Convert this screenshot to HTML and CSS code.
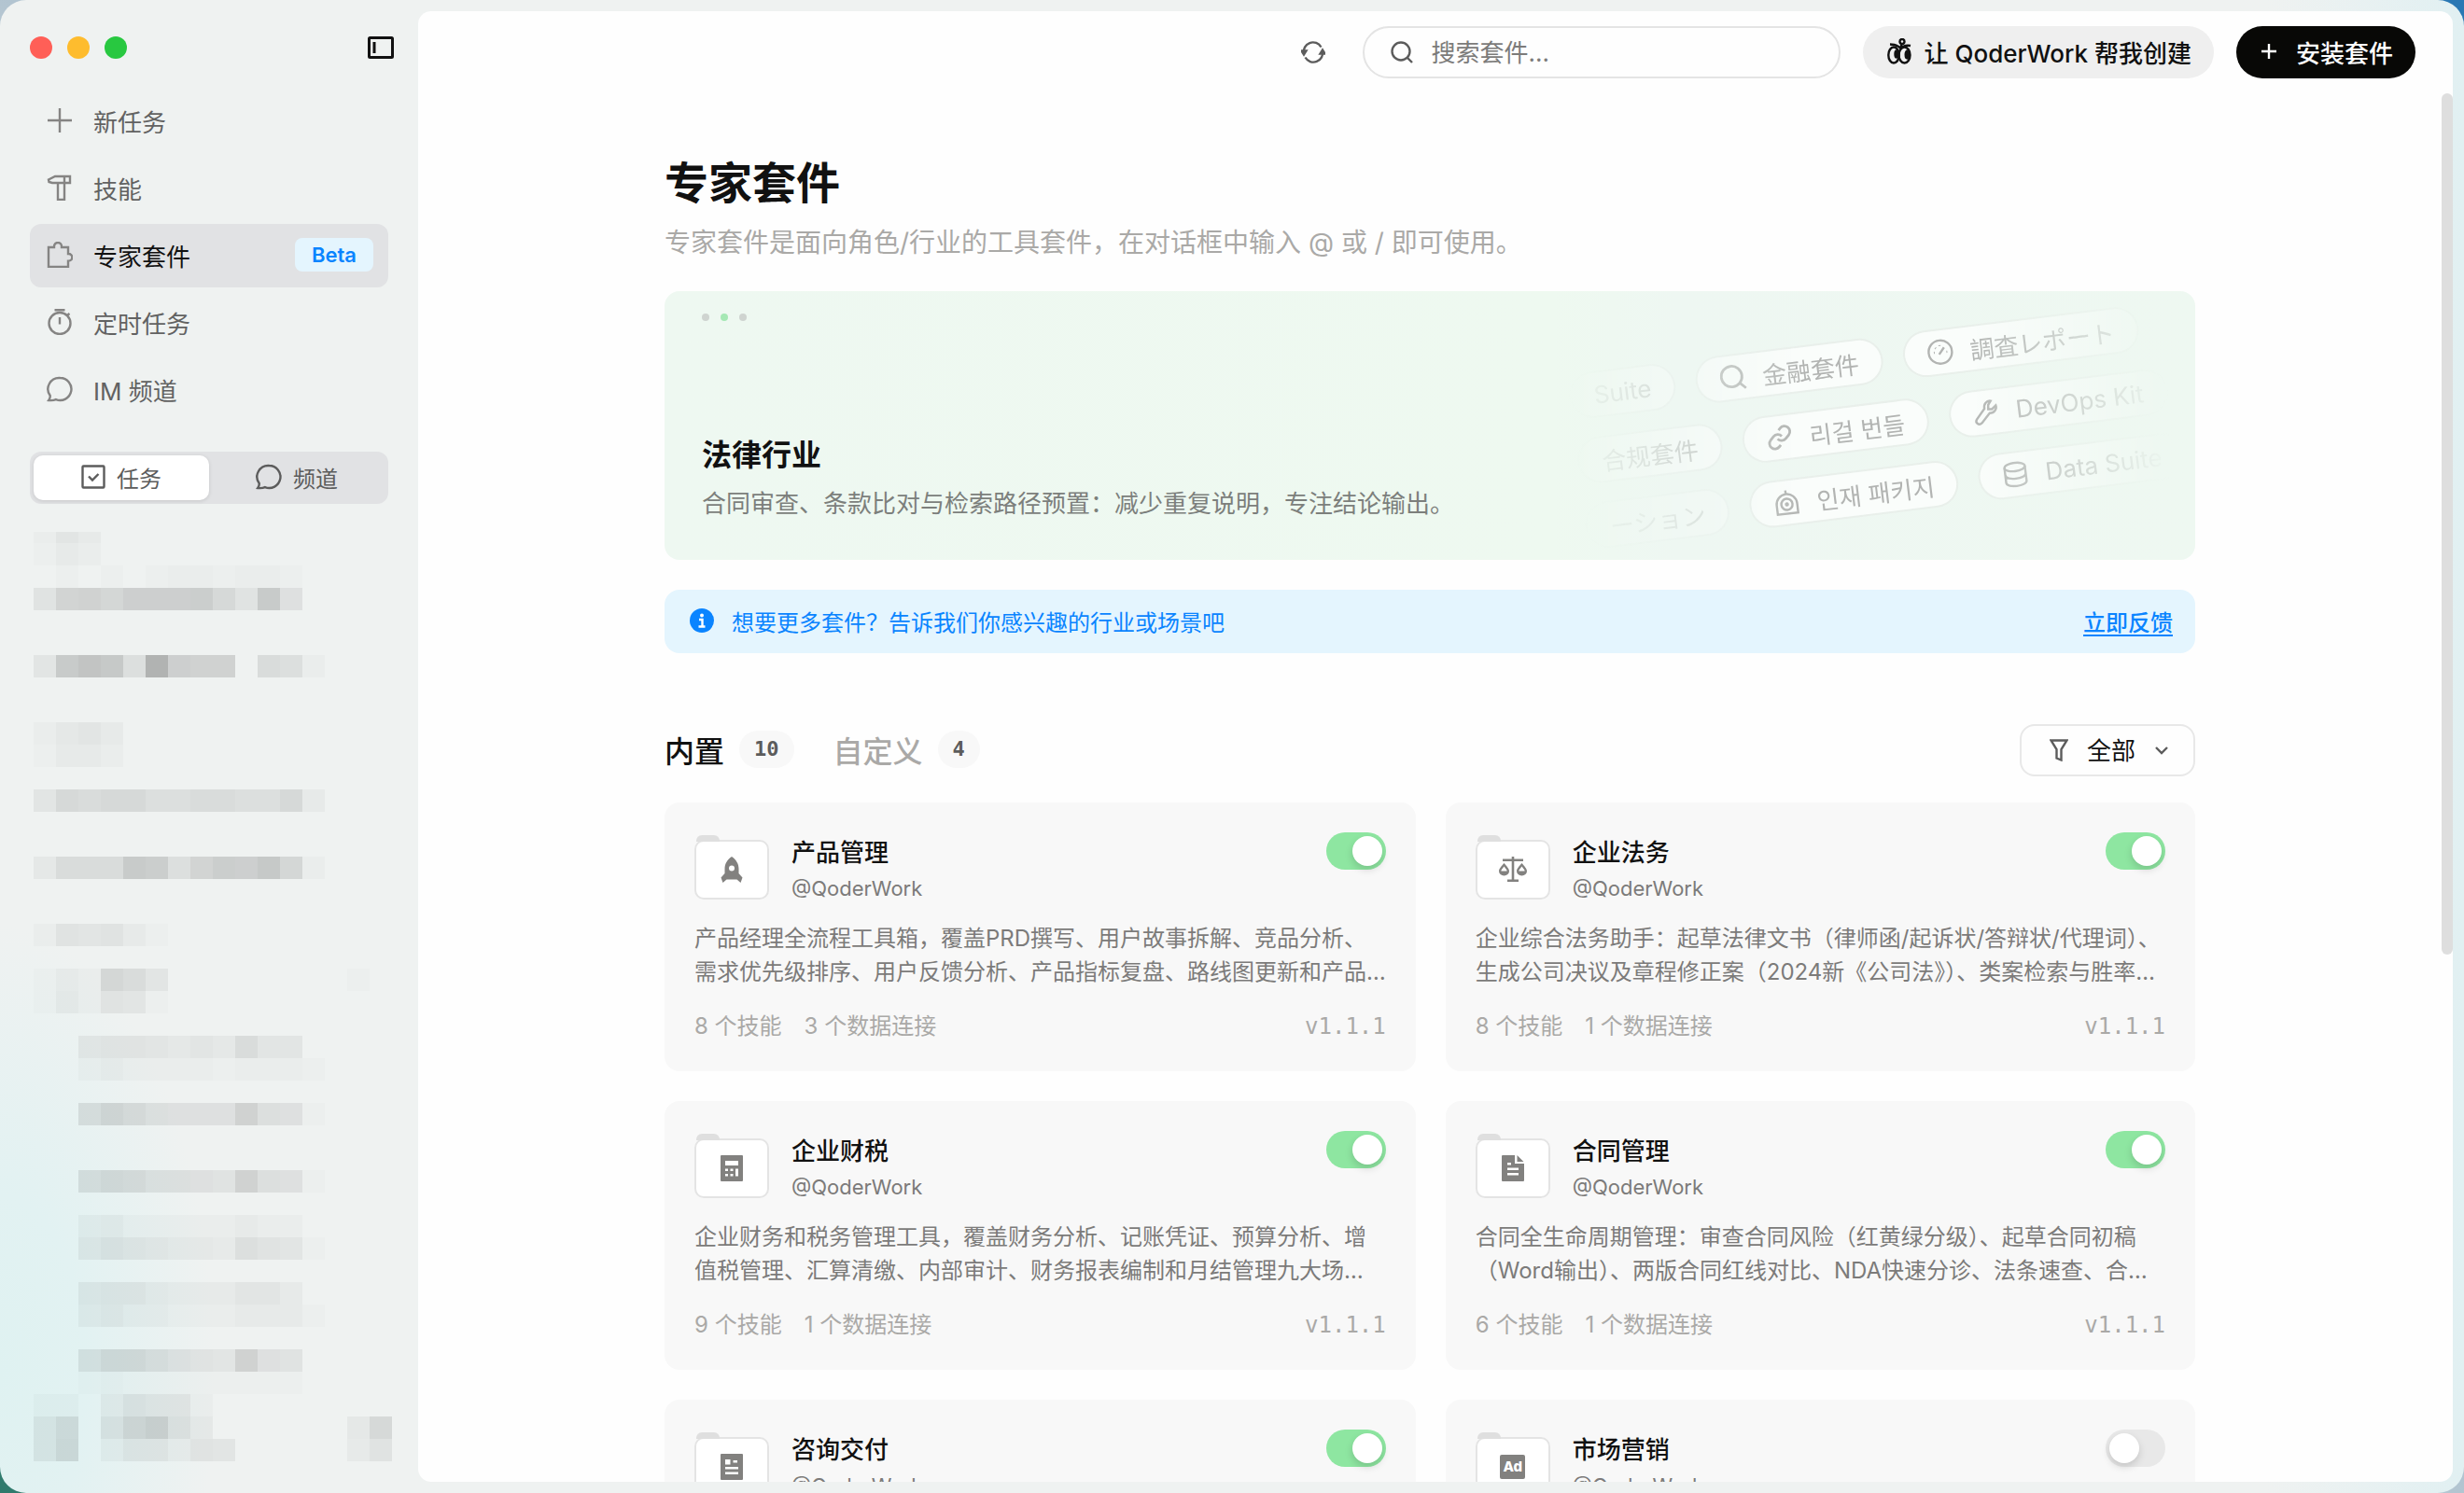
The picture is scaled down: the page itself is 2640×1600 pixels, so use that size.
FILE: index.html
```html
<!DOCTYPE html>
<html lang="zh-CN">

<head>
  <meta charset="UTF-8" />
  <meta name="viewport" content="width=device-width, initial-scale=1.0" />
  <title>专家套件</title>
  <link rel="stylesheet" href="styles.css">
</head>

<body>

  <!-- Icon sprite -->
  <svg class="sprite" aria-hidden="true">
    <symbol id="i-chat" viewBox="0 0 28 28">
      <path d="M14.5 2a12 12 0 1 1-4.6 23.1C8 26 5 26.300 2.200 26c1.200-1.600 1.700-3.300 1.500-5A12 12 0 0 1 14.500 2z" />
    </symbol>
    <symbol id="i-search" viewBox="0 0 24 24">
      <circle cx="11" cy="11" r="9.500" />
      <path d="M18 18l5 5" />
    </symbol>
  </svg>

  <div class="window">

    <aside class="sidebar">
      <div class="titlebar">
        <span class="light red"></span>
        <span class="light yellow"></span>
        <span class="light green"></span>
        <button class="collapse-btn" aria-label="收起侧边栏">
          <svg width="28" height="24" viewBox="0 0 28 24">
            <rect x="1.500" y="1.500" width="25" height="21" rx="1" />
            <path d="M7 6v12" />
          </svg>
        </button>
      </div>

      <nav class="nav">
        <a href="#">
          <svg width="28" height="28" viewBox="0 0 28 28"><path d="M14 1v26M1 14h26" /></svg>
          新任务
        </a>
        <a href="#">
          <svg width="28" height="28" viewBox="0 0 28 28">
            <path d="M2 5.500L9 2h16v7h-6v18h-7V9H6L2.500 8z M19 2v7 M12 9h7" />
          </svg>
          技能
        </a>
        <a href="#" class="active">
          <svg width="28" height="28" viewBox="0 0 28 28">
            <path d="M2 6h6V5a4 4 0 0 1 8 0v1h7v7h.5a3.800 3.800 0 0 1 0 7.600H23V27H2z" />
          </svg>
          专家套件
          <span class="beta">Beta</span>
        </a>
        <a href="#">
          <svg width="28" height="28" viewBox="0 0 28 28">
            <circle cx="14" cy="15.500" r="11.500" />
            <path d="M8.500 1.200h11M14 9v7.500M22 7l2.500-2" />
          </svg>
          定时任务
        </a>
        <a href="#">
          <svg width="28" height="28"><use href="#i-chat" /></svg>
          IM 频道
        </a>
      </nav>

      <div class="segment">
        <button class="selected">
          <svg width="26" height="26" viewBox="0 0 26 26">
            <rect x="1.500" y="1.500" width="23" height="23" rx="1" />
            <path d="M8 12.500l4 4 6.500-6.500" />
          </svg>
          任务
        </button>
        <button>
          <svg width="28" height="28"><use href="#i-chat" /></svg>
          频道
        </button>
      </div>

      <div class="mosaic" id="mosaic" aria-hidden="true"></div>
    </aside>

    <main class="main">
      <header class="toolbar">
        <button class="refresh-btn" aria-label="刷新">
          <svg width="26" height="26" viewBox="0 0 26 26">
            <path d="M3 14.500a10 10 0 0 1 18.500-7M23 11.500a10 10 0 0 1-18.500 7" />
            <path class="solid" d="M.5 11.500h5L3 15.500zM20.500 14.500h5L23 10.500z" />
          </svg>
        </button>
        <label class="search">
          <svg width="24" height="24"><use href="#i-search" /></svg>
          <input type="text" placeholder="搜索套件..." aria-label="搜索套件" />
        </label>
        <button class="pill-btn">
          <svg width="26" height="28" viewBox="0 0 26 28">
            <circle cx="16" cy="3.500" r="2.500" />
            <path d="M3 6.500c6 0 9 1.500 11.500 4.500C17 8 20 7 25 8M15.500 6l-1 5" />
            <ellipse cx="7" cy="18" rx="5.700" ry="8.500" />
            <ellipse cx="18.500" cy="18" rx="6" ry="8.500" />
            <ellipse class="solid" cx="10" cy="17" rx="1.500" ry="3.500" />
            <ellipse class="solid" cx="21.500" cy="17.500" rx="1.800" ry="4" />
          </svg>
          让 QoderWork 帮我创建
        </button>
        <button class="pill-btn dark">
          <svg width="18" height="18" viewBox="0 0 18 18"><path d="M9 1v16M1 9h16" /></svg>
          安装套件
        </button>
      </header>

      <div class="scroll-area">
        <div class="content">
          <h1>专家套件</h1>
          <p class="subtitle">专家套件是面向角色/行业的工具套件，在对话框中输入 @ 或 / 即可使用。</p>

          <section class="banner">
            <div class="dots"><span></span><span class="on"></span><span></span></div>
            <div class="banner-text">
              <h2>法律行业</h2>
              <p>合同审查、条款比对与检索路径预置：减少重复说明，专注结论输出。</p>
            </div>
            <div class="chips" aria-hidden="true">
              <div class="chips-tilt">
                <div class="chip-row">
                  <span class="chip">Suite</span>
                  <span class="chip">
                    <svg width="28" height="28" viewBox="0 0 24 24"><use href="#i-search" /></svg>
                    金融套件
                  </span>
                  <span class="chip">
                    <svg width="28" height="28" viewBox="0 0 28 28">
                      <circle cx="14" cy="14" r="12.500" />
                      <path d="M12.500 16.500l6-7M7 14h1M9 9l.7.7M14 6.500v1M20.500 14.500h1" />
                    </svg>
                    調査レポート
                  </span>
                </div>
                <div class="chip-row">
                  <span class="chip">合规套件</span>
                  <span class="chip">
                    <svg width="28" height="28" viewBox="0 0 24 24">
                      <path d="M10 13a5 5 0 0 0 7.540.540l3-3a5 5 0 0 0-7.070-7.070l-1.720 1.710M14 11a5 5 0 0 0-7.540-.540l-3 3a5 5 0 0 0 7.070 7.070l1.710-1.710" />
                    </svg>
                    리걸 번들
                  </span>
                  <span class="chip">
                    <svg width="28" height="28" viewBox="0 0 28 28">
                      <path d="M20 2.500c-4-1-8 2.500-7.500 7.500L3 20.500c-2.500 3.500 1.500 7 5 4.500L17.500 15.500c5 .5 8.500-3.500 7.500-7.500l-4.500 3.500-4-.5.5-4.500z" />
                    </svg>
                    DevOps Kit
                  </span>
                </div>
                <div class="chip-row">
                  <span class="chip faint">ーション</span>
                  <span class="chip">
                    <svg width="28" height="28" viewBox="0 0 28 28">
                      <path d="M3 26V16a11 11 0 0 1 22 0v10zM14 1v4" />
                      <circle cx="14" cy="16" r="6" />
                      <circle cx="14" cy="16" r="1" />
                    </svg>
                    인재 패키지
                  </span>
                  <span class="chip">
                    <svg width="28" height="28" viewBox="0 0 28 28">
                      <ellipse cx="14" cy="6" rx="11" ry="4.500" />
                      <path d="M3 6v16c0 6 22 6 22 0V6M3 14c0 6 22 6 22 0" />
                    </svg>
                    Data Suite
                  </span>
                </div>
              </div>
            </div>
          </section>

          <div class="notice">
            <svg width="28" height="28" viewBox="0 0 28 28">
              <circle class="disc" cx="14" cy="14" r="13" />
              <circle class="mark" cx="14" cy="8.500" r="2" />
              <path d="M11 13h3.500v7M10.500 20.500h7" />
            </svg>
            <span>想要更多套件？告诉我们你感兴趣的行业或场景吧</span>
            <a href="#">立即反馈</a>
          </div>

          <div class="tabs">
            <button class="tab current">内置 <span class="count">10</span></button>
            <button class="tab">自定义 <span class="count">4</span></button>
            <label class="filter">
              <svg width="20" height="24" viewBox="0 0 20 24"><path d="M1.500 1.500h17L12.500 11v11.500l-5-2V11z" /></svg>
              <select aria-label="筛选">
                <option>全部</option>
              </select>
              <svg width="16" height="16" viewBox="0 0 16 16"><path d="M2 5l6 6 6-6" /></svg>
            </label>
          </div>

          <div class="cards">
            <article class="card">
              <div class="card-head">
                <div class="folder">
                  <svg width="28" height="28" viewBox="0 0 28 28">
                    <path fill-rule="evenodd" d="M14 0c5 3.500 7.500 8 7.500 13v5l4 4.500-2 5.500-4-3.500h-11L4.500 28l-2-5.500 4-4.500v-5C6.500 8 9 3.500 14 0zM14 9.500a3 3 0 1 0 0 6 3 3 0 0 0 0-6z" />
                  </svg>
                </div>
                <div class="card-title">
                  <h3>产品管理</h3>
                  <p>@QoderWork</p>
                </div>
                <input type="checkbox" class="switch" aria-label="启用产品管理" checked />
              </div>
              <p class="desc">产品经理全流程工具箱，覆盖PRD撰写、用户故事拆解、竞品分析、<br />需求优先级排序、用户反馈分析、产品指标复盘、路线图更新和产品…</p>
              <div class="card-foot">
                <span>8 个技能</span>
                <span>3 个数据连接</span>
                <span class="version">v1.1.1</span>
              </div>
            </article>

            <article class="card">
              <div class="card-head">
                <div class="folder">
                  <svg width="30" height="28" viewBox="0 0 30 28">
                    <path d="M13.700 0h2.600v2.500H26V5h-9.700v19.500H21V27H9v-2.500h4.700V5H4V2.500h9.700z" />
                    <path fill-rule="evenodd" d="M5.500 7C8 10 11 13 11 15.500a5.500 5 0 0 1-11 0C0 13 3 10 5.500 7zM5.500 10.500C4 12.500 2.500 14 2.300 15.500h6.400C8.500 14 7 12.500 5.500 10.500zM24.500 7C27 10 30 13 30 15.500a5.500 5 0 0 1-11 0C19 13 22 10 24.500 7zM24.500 10.500c-1.500 2-3 3.500-3.200 5h6.400c-.2-1.500-1.700-3-3.200-5z" />
                  </svg>
                </div>
                <div class="card-title">
                  <h3>企业法务</h3>
                  <p>@QoderWork</p>
                </div>
                <input type="checkbox" class="switch" aria-label="启用企业法务" checked />
              </div>
              <p class="desc">企业综合法务助手：起草法律文书（律师函/起诉状/答辩状/代理词）、<br />生成公司决议及章程修正案（2024新《公司法》）、类案检索与胜率…</p>
              <div class="card-foot">
                <span>8 个技能</span>
                <span>1 个数据连接</span>
                <span class="version">v1.1.1</span>
              </div>
            </article>

            <article class="card">
              <div class="card-head">
                <div class="folder">
                  <svg width="24" height="28" viewBox="0 0 24 28">
                    <path fill-rule="evenodd" d="M1 0h22a1 1 0 0 1 1 1v26a1 1 0 0 1-1 1H1a1 1 0 0 1-1-1V1a1 1 0 0 1 1-1zM5 6v5h14V6zM5 14.500v2.500h3v-2.500zM10.500 14.500v2.500h3v-2.500zM5 20v2.500h3V20zM10.500 20v2.500h3V20zM16 14.500v8h3v-8z" />
                  </svg>
                </div>
                <div class="card-title">
                  <h3>企业财税</h3>
                  <p>@QoderWork</p>
                </div>
                <input type="checkbox" class="switch" aria-label="启用企业财税" checked />
              </div>
              <p class="desc">企业财务和税务管理工具，覆盖财务分析、记账凭证、预算分析、增<br />值税管理、汇算清缴、内部审计、财务报表编制和月结管理九大场…</p>
              <div class="card-foot">
                <span>9 个技能</span>
                <span>1 个数据连接</span>
                <span class="version">v1.1.1</span>
              </div>
            </article>

            <article class="card">
              <div class="card-head">
                <div class="folder">
                  <svg width="24" height="28" viewBox="0 0 24 28">
                    <path fill-rule="evenodd" d="M1 0h13v9h10v18a1 1 0 0 1-1 1H1a1 1 0 0 1-1-1V1a1 1 0 0 1 1-1zM6 8v2.500h4V8zM6 13.500V16h12v-2.500zM6 19v2.500h12V19zM16.500 0L23.500 7h-7z" />
                  </svg>
                </div>
                <div class="card-title">
                  <h3>合同管理</h3>
                  <p>@QoderWork</p>
                </div>
                <input type="checkbox" class="switch" aria-label="启用合同管理" checked />
              </div>
              <p class="desc">合同全生命周期管理：审查合同风险（红黄绿分级）、起草合同初稿<br />（Word输出）、两版合同红线对比、NDA快速分诊、法条速查、合…</p>
              <div class="card-foot">
                <span>6 个技能</span>
                <span>1 个数据连接</span>
                <span class="version">v1.1.1</span>
              </div>
            </article>

            <article class="card">
              <div class="card-head">
                <div class="folder">
                  <svg width="24" height="28" viewBox="0 0 24 28">
                    <path fill-rule="evenodd" d="M1 0h22a1 1 0 0 1 1 1v26a1 1 0 0 1-1 1H1a1 1 0 0 1-1-1V1a1 1 0 0 1 1-1zM5 6v5.500h5.500V6zM13.500 7v2.500H18V7zM5 14v2.500h14V14zM5 19.500V22h14v-2.500z" />
                  </svg>
                </div>
                <div class="card-title">
                  <h3>咨询交付</h3>
                  <p>@QoderWork</p>
                </div>
                <input type="checkbox" class="switch" aria-label="启用咨询交付" checked />
              </div>
            </article>

            <article class="card">
              <div class="card-head">
                <div class="folder"><span class="ad">Ad</span></div>
                <div class="card-title">
                  <h3>市场营销</h3>
                  <p>@QoderWork</p>
                </div>
                <input type="checkbox" class="switch" aria-label="启用市场营销" />
              </div>
            </article>
          </div>
        </div>
        <div class="scroll-thumb"></div>
      </div>
    </main>

  </div>

  <script src="script.js"></script>
</body>

</html>
```

FILE: styles.css
```css
* {
  box-sizing: border-box;
}

body {
  margin: 0;
  font-family: Inter, "Noto Sans CJK SC", "Noto Sans CJK KR", sans-serif;
  font-size: 24px;
  color: #111;
  background: linear-gradient(to top right, #2f7a6c 0%, #d5d8d8 40%, #2a78b4 90%);
}

h1,
h2,
h3,
p {
  margin: 0;
}

button,
input,
select {
  font: inherit;
  color: inherit;
  border: none;
  background: none;
  padding: 0;
  cursor: pointer;
}

svg {
  flex: none;
  fill: none;
  stroke: currentColor;
  stroke-width: 2.4;
}

.solid {
  fill: currentColor;
}

.sprite {
  position: absolute;
  width: 0;
  height: 0;
}

.window {
  display: flex;
  height: 100vh;
  overflow: hidden;
  border-radius: 28px;
  background:
    radial-gradient(ellipse 230px 480px at 0 92%, #dff2f1 0, #e2f2f2 40%, rgba(223, 242, 241, 0) 100%),
    linear-gradient(to right, rgba(225, 240, 242, 0) 92%, #e1f0f2 100%),
    #eff2f1;
}

/* Sidebar */
.sidebar {
  flex: none;
  width: 448px;
  padding: 0 32px;
}

.titlebar {
  display: flex;
  align-items: center;
  gap: 16px;
  height: 96px;
  padding-top: 6px;
  margin-right: -6px;
}

.light {
  width: 24px;
  height: 24px;
  border-radius: 50%;
}

.red {
  background: #ff5f57;
}

.yellow {
  background: #febc2e;
}

.green {
  background: #28c840;
}

.collapse-btn {
  display: flex;
  margin-left: auto;
}

.collapse-btn svg {
  stroke-width: 3;
}

.nav {
  display: flex;
  flex-direction: column;
  gap: 4px;
}

.nav a {
  display: flex;
  align-items: center;
  gap: 22px;
  height: 68px;
  padding: 0 16px 2px 18px;
  border-radius: 12px;
  font-size: 26px;
  color: #626262;
  text-decoration: none;
}

.nav svg {
  color: #858483;
}

.nav .active {
  background: #e1e2e4;
  color: #111;
}

.beta {
  margin-left: auto;
  padding: 0 18px;
  border-radius: 8px;
  background: #e4f5fe;
  color: #0a84ff;
  font-size: 22px;
  font-weight: 600;
  line-height: 36px;
}

.segment {
  display: flex;
  height: 56px;
  margin-top: 32px;
  padding: 4px;
  border-radius: 12px;
  background: #e1e2e4;
}

.segment button {
  display: flex;
  flex: 1;
  align-items: center;
  justify-content: center;
  gap: 12px;
  padding-bottom: 2px;
  border-radius: 10px;
  color: #5c5c5c;
}

.segment .selected {
  background: #fff;
  box-shadow: 0 1px 4px rgba(0, 0, 0, 0.12);
}

.mosaic {
  display: grid;
  grid-template-columns: repeat(16, 24px);
  grid-template-rows: 12px;
  grid-auto-rows: 24px;
  margin: 30px 0 0 4px;
}

/* Main panel */
.main {
  display: flex;
  flex: 1;
  flex-direction: column;
  min-width: 0;
  margin: 12px 12px 12px 0;
  overflow: hidden;
  border-radius: 14px;
  background: #fefefe;
}

.toolbar {
  display: flex;
  flex: none;
  align-items: center;
  justify-content: flex-end;
  gap: 24px;
  height: 88px;
  padding-right: 40px;
  font-size: 26px;
}

.refresh-btn {
  display: flex;
  margin-right: 16px;
  color: #5c5c5c;
}

.search {
  display: flex;
  align-items: center;
  gap: 20px;
  width: 512px;
  height: 56px;
  padding: 0 28px;
  border: 2px solid #e4e4e4;
  border-radius: 28px;
  color: #5c5c5c;
}

.search input {
  flex: 1;
  min-width: 0;
  outline: none;
}

.search input::placeholder {
  color: #7c7b7a;
}

.pill-btn {
  display: flex;
  align-items: center;
  gap: 14px;
  height: 56px;
  padding: 0 24px 2px 26px;
  border-radius: 28px;
  background: #efefef;
  font-weight: 500;
}

.dark {
  gap: 20px;
  background: #080806;
  color: #fff;
}

.scroll-area {
  position: relative;
  flex: 1;
  min-height: 0;
  padding-right: 12px;
  overflow: hidden;
}

.scroll-thumb {
  position: absolute;
  top: 0;
  right: 0;
  width: 12px;
  height: 62%;
  border-radius: 6px;
  background: #dedede;
}

.content {
  max-width: 1640px;
  margin: 0 auto;
  padding-top: 64px;
}

h1 {
  font-size: 47px;
  line-height: 64px;
}

.subtitle {
  margin-top: 12px;
  font-size: 28px;
  line-height: 40px;
  color: #aaa9a7;
}

/* Banner */
.banner {
  position: relative;
  display: flex;
  flex-direction: column;
  justify-content: space-between;
  height: 288px;
  margin-top: 32px;
  padding: 24px 40px;
  overflow: hidden;
  border-radius: 16px;
  background: linear-gradient(to right, #eef8f1 0%, #eef9f0 58%, #eef7f2 66%, #eef8f1 100%);
}

.dots {
  display: flex;
  gap: 12px;
}

.dots span {
  width: 8px;
  height: 8px;
  border-radius: 50%;
  background: #cfd4d0;
}

.dots .on {
  background: #a5e8b4;
}

.banner-text {
  padding-bottom: 16px;
}

.banner h2 {
  font-size: 32px;
  font-weight: 600;
  line-height: 48px;
}

.banner p {
  margin-top: 8px;
  font-size: 26px;
  line-height: 40px;
  color: #7c7f7c;
}

.chips {
  position: absolute;
  top: 0;
  right: 0;
  bottom: 0;
  display: flex;
  align-items: center;
  width: 680px;
  -webkit-mask-image: linear-gradient(to right, transparent 0%, rgba(0, 0, 0, 0.3) 14%, #000 38%, #000 64%, transparent 96%);
  mask-image: linear-gradient(to right, transparent 0%, rgba(0, 0, 0, 0.3) 14%, #000 38%, #000 64%, transparent 96%);
}

.chips-tilt {
  display: flex;
  flex-direction: column;
  gap: 24px;
  width: 100%;
  padding-left: 18px;
  transform: rotate(-7deg);
}

.chip-row {
  display: flex;
  gap: 26px;
}

.chip {
  display: flex;
  flex: none;
  align-items: center;
  gap: 18px;
  height: 46px;
  padding: 0 24px;
  border-radius: 23px;
  background: rgba(255, 255, 255, 0.7);
  box-shadow: 0 0 0 2px rgba(220, 215, 215, 0.25);
  font-size: 26px;
  color: #b2b4b2;
}

.faint {
  opacity: 0.5;
}

/* Feedback notice */
.notice {
  display: flex;
  align-items: center;
  gap: 18px;
  height: 68px;
  margin-top: 32px;
  padding: 0 24px 2px 26px;
  border-radius: 16px;
  background: #e4f5fe;
  color: #0a84ff;
}

.notice .disc {
  fill: #0a84ff;
  stroke: none;
}

.notice .mark {
  fill: #fff;
  stroke: none;
}

.notice path {
  stroke: #fff;
}

.notice a {
  margin-left: auto;
  color: inherit;
  font-weight: 500;
  text-underline-offset: 4px;
}

/* Tabs */
.tabs {
  display: flex;
  align-items: center;
  gap: 42px;
  margin-top: 76px;
}

.tab {
  display: flex;
  align-items: center;
  gap: 16px;
  padding-bottom: 2px;
  font-size: 32px;
  font-weight: 500;
  color: #aaa9a7;
}

.tab.current {
  color: #111;
}

.count {
  padding: 0 16px;
  border-radius: 20px;
  background: #f8f8f8;
  color: #5c5c5c;
  font-family: "DejaVu Sans Mono", monospace;
  font-size: 22px;
  font-weight: 700;
  line-height: 40px;
}

.filter {
  display: flex;
  align-items: center;
  gap: 20px;
  height: 56px;
  margin-left: auto;
  padding: 0 26px 0 30px;
  border: 2px solid #e8e8e8;
  border-radius: 16px;
  font-size: 26px;
  color: #5c5c5c;
}

.filter select {
  width: 52px;
  appearance: none;
  color: #111;
}

/* Cards */
.cards {
  display: grid;
  grid-template-columns: 1fr 1fr;
  gap: 32px;
  margin-top: 28px;
}

.card {
  height: 288px;
  padding: 32px;
  border-radius: 16px;
  background: #f8f8f8;
}

.card-head {
  display: flex;
  height: 76px;
}

.folder {
  position: relative;
  display: flex;
  align-items: center;
  justify-content: center;
  width: 80px;
  height: 64px;
  margin: 8px 24px 0 0;
  border: 2px solid #e4e4e4;
  border-radius: 10px;
  background: #fff;
}

.folder::before {
  content: "";
  position: absolute;
  top: -7px;
  left: 0;
  width: 25px;
  height: 7px;
  border-radius: 6px 6px 0 0;
  background: #dfdfdf;
}

.folder svg {
  fill: #82817f;
  stroke: none;
}

.ad {
  padding: 0 3px;
  border-radius: 2px;
  background: #82817f;
  color: #fff;
  font-size: 15px;
  font-weight: 800;
  line-height: 26px;
}

.card h3 {
  font-size: 26px;
  font-weight: 500;
  line-height: 44px;
}

.card-title p {
  font-size: 22px;
  line-height: 32px;
  color: #7c7b7a;
}

.switch {
  appearance: none;
  width: 64px;
  height: 40px;
  margin: 0 0 0 auto;
  padding: 4px;
  border-radius: 20px;
  background: #e8e8e8;
}

.switch::before {
  content: "";
  display: block;
  width: 32px;
  height: 32px;
  border-radius: 50%;
  background: #fff;
  box-shadow: 0 4px 8px rgba(0, 0, 0, 0.15);
}

.switch:checked {
  background: #8ee6a1;
}

.switch:checked::before {
  margin-left: 24px;
}

.desc {
  margin-top: 20px;
  line-height: 36px;
  color: #7c7b7a;
  white-space: nowrap;
}

.card-foot {
  display: flex;
  gap: 24px;
  margin-top: 24px;
  line-height: 32px;
  color: #aaa9a7;
}

.version {
  margin-left: auto;
  font-family: "DejaVu Sans Mono", monospace;
}
```

FILE: script.js
```javascript
// Opacity (in percent) of every masked cell, one array per row
const rows = [
  [2, 5, 3],
  [1, 3, 2],
  [0, 1, 0, 1, 0, 1, 2, 2, 1, 2, 2, 1],
  [6, 12, 13, 11, 14, 14, 14, 15, 10, 6, 16, 7],
  [],
  [],
  [5, 16, 19, 17, 8, 26, 14, 13, 13, 0, 9, 8, 2],
  [],
  [],
  [2, 4, 5, 3],
  [1, 3, 3, 2],
  [],
  [5, 10, 9, 10, 10, 8, 8, 9, 9, 8, 8, 10, 3],
  [],
  [],
  [4, 9, 9, 9, 16, 15, 8, 12, 15, 14, 17, 11, 2],
  [],
  [],
  [2, 6, 5, 6, 3, 1],
  [],
  [1, 3, 2, 11, 9, 5, 0, 0, 0, 0, 0, 0, 0, 0, 1],
  [1, 4, 2, 6, 5, 1],
  [],
  [0, 0, 5, 6, 6, 5, 4, 5, 4, 9, 5, 5],
  [0, 0, 2, 3, 2, 2, 2, 2, 1, 2, 2, 2, 1],
  [],
  [0, 0, 9, 12, 10, 8, 7, 7, 7, 13, 8, 7, 1],
  [],
  [],
  [0, 0, 9, 11, 10, 8, 8, 7, 6, 13, 8, 7, 1],
  [],
  [0, 0, 3, 4, 2, 2, 2, 2, 2, 3, 2, 2],
  [0, 0, 5, 7, 6, 5, 4, 4, 3, 8, 6, 5, 1],
  [],
  [0, 0, 5, 6, 6, 4, 3, 3, 3, 5, 5, 3],
  [0, 0, 4, 5, 3, 3, 2, 2, 2, 3, 3, 3, 1],
  [],
  [0, 0, 8, 11, 11, 9, 7, 6, 5, 13, 7, 6],
  [0, 0, 1, 2, 1, 1, 1, 1, 1, 1, 1, 1],
  [2, 2, 0, 4, 7, 6, 6, 2],
  [6, 10, 0, 7, 12, 15, 8, 4, 0, 0, 0, 0, 0, 0, 4, 10],
  [6, 11, 0, 3, 6, 6, 3, 6, 5, 0, 0, 0, 0, 0, 3, 6]
];

const mosaic = document.getElementById('mosaic');

rows.forEach(row => {
  for (let i = 0; i < 16; i++) {
    const cell = document.createElement('span');
    if (row[i]) {
      cell.style.background = `rgba(0, 0, 0, ${row[i] / 100})`;
    }
    mosaic.appendChild(cell);
  }
});
```
